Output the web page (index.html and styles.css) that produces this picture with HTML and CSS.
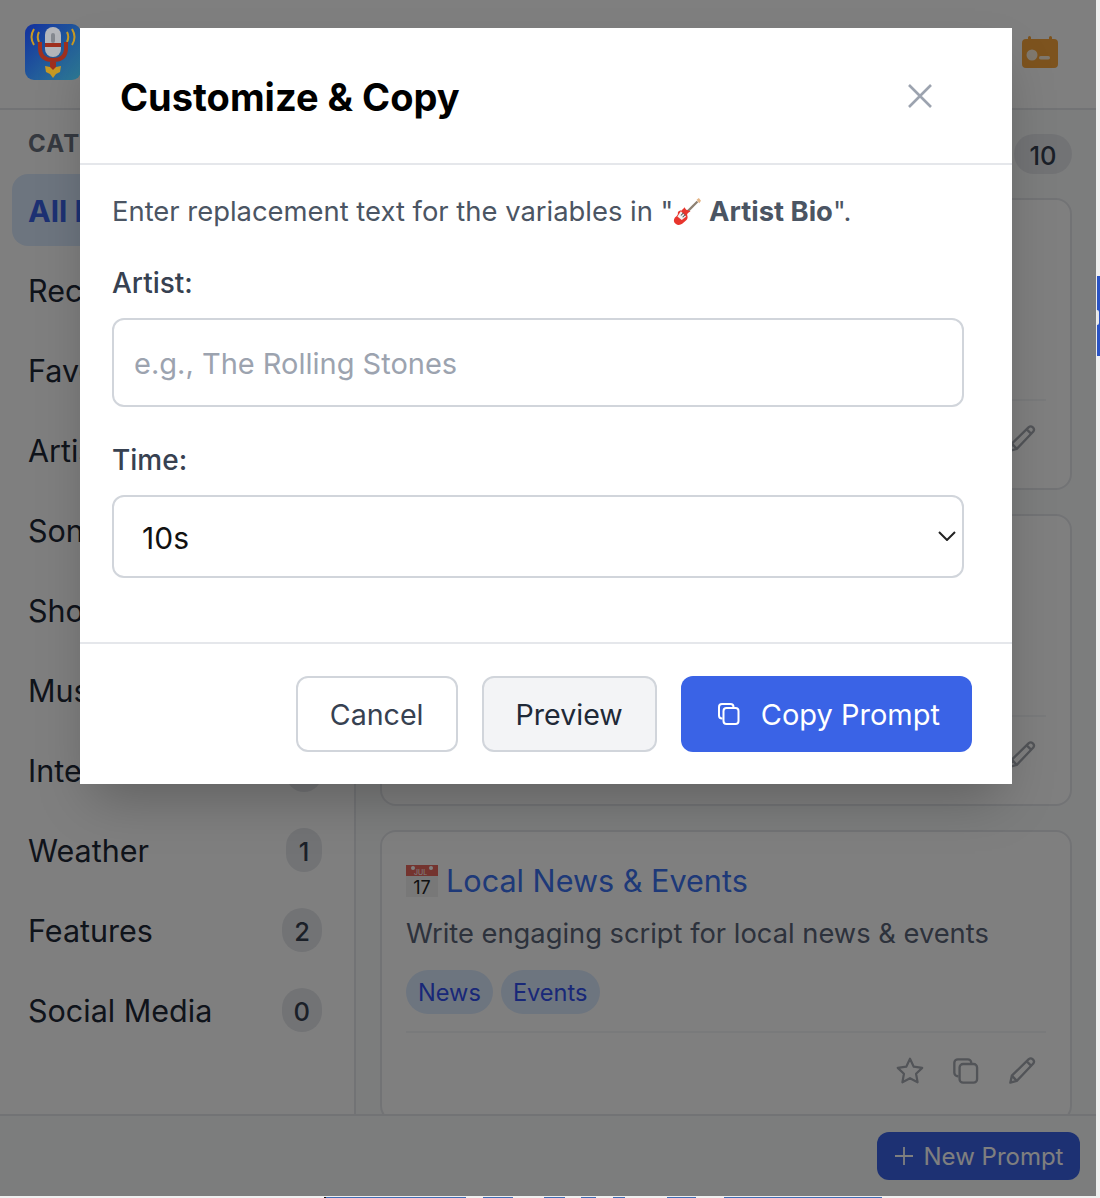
FILE: index.html
```html
<!DOCTYPE html>
<html lang="en">
<head>
  <meta charset="UTF-8">
  <meta name="viewport" content="width=device-width, initial-scale=1.0">
  <title>Prompts</title>
  <link rel="stylesheet" href="styles.css">
</head>
<body>
  <div class="app">
    <header class="topbar">
      <svg class="logo" viewBox="0 0 56 56">
        <defs>
          <linearGradient id="logoBg" x1="0" y1="0" x2="1" y2="1">
            <stop offset="0" stop-color="#12309f"/>
            <stop offset="1" stop-color="#2f7f98"/>
          </linearGradient>
        </defs>
        <rect width="56" height="56" rx="9" fill="url(#logoBg)"/>
        <path d="M9 5q-5 8 0 16M14 8q-2.500 5 0 10M47 5q5 8 0 16M42 8q2.500 5 0 10" fill="none" stroke="#c89a24" stroke-width="2"/>
        <rect x="20" y="3" width="16" height="30" rx="8" fill="#b4b6bb"/>
        <rect x="26" y="9" width="4" height="10" rx="2" fill="#84888f"/>
        <rect x="20" y="19" width="16" height="4" fill="#a0301e"/>
        <path d="M15 18v6q0 12 13 12t13-12v-6" fill="none" stroke="#a0301e" stroke-width="4"/>
        <path d="M28 38l3 5 5-1-1 6-4 2-3 4-3-4-4-2-1-6 5 1z" fill="#c89a24"/>
        <path d="M25 38h6v5l-3 3-3-3z" fill="#a0301e"/>
      </svg>
      <svg class="radio-icon" viewBox="0 0 36 32">
        <path d="M6 1.500a1.500 1.500 0 0 1 3 0V3h18V1.500a1.500 1.500 0 0 1 3 0V3h2q4 0 4 4v21q0 4-4 4H4q-4 0-4-4V7q0-4 4-4h2z" fill="#faa73c"/>
        <circle cx="10" cy="19" r="5.500" fill="#fff1dc"/>
        <rect x="17" y="20" width="11" height="3.500" rx="1.700" fill="#fff1dc"/>
      </svg>
    </header>

    <div class="content">
      <aside class="sidebar">
        <h3 class="side-title">CATEGORIES</h3>
        <a class="side-item active"><span>All Prompts</span><span class="count">10</span></a>
        <a class="side-item"><span>Recent</span><span class="count">0</span></a>
        <a class="side-item"><span>Favorites</span><span class="count">0</span></a>
        <a class="side-item"><span>Artists</span><span class="count">1</span></a>
        <a class="side-item"><span>Songs</span><span class="count">1</span></a>
        <a class="side-item"><span>Shows</span><span class="count">1</span></a>
        <a class="side-item"><span>Music</span><span class="count">1</span></a>
        <a class="side-item"><span>Interviews</span><span class="count">1</span></a>
        <a class="side-item"><span>Weather</span><span class="count">1</span></a>
        <a class="side-item"><span>Features</span><span class="count">2</span></a>
        <a class="side-item"><span>Social Media</span><span class="count">0</span></a>
      </aside>

      <main class="main">
        <div class="main-head"><span class="count">10</span></div>

        <article class="card">
          <div class="card-body"></div>
          <div class="card-actions">
            <svg class="act" viewBox="0 0 24 24"><use href="#star"/></svg>
            <svg class="act" viewBox="0 0 24 24"><use href="#copy"/></svg>
            <svg class="act" viewBox="0 0 24 24"><use href="#pencil"/></svg>
          </div>
        </article>

        <article class="card">
          <div class="card-body"></div>
          <div class="card-actions">
            <svg class="act" viewBox="0 0 24 24"><use href="#star"/></svg>
            <svg class="act" viewBox="0 0 24 24"><use href="#copy"/></svg>
            <svg class="act" viewBox="0 0 24 24"><use href="#pencil"/></svg>
          </div>
        </article>

        <article class="card">
          <div class="card-body">
            <h4 class="card-title">
              <svg class="cal" viewBox="0 0 32 32">
                <rect width="32" height="32" fill="#f0f0f0"/>
                <rect width="32" height="11" fill="#e8685e"/>
                <circle cx="7" cy="3" r="2" fill="#fff"/>
                <circle cx="25" cy="3" r="2" fill="#fff"/>
                <text x="8" y="10" class="cal-month">JUL</text>
                <text x="16" y="29" text-anchor="middle" class="cal-num">17</text>
              </svg>
              <span>Local News &amp; Events</span>
            </h4>
            <p class="card-desc">Write engaging script for local news &amp; events</p>
            <div class="tags"><span class="tag">News</span><span class="tag">Events</span></div>
          </div>
          <div class="card-actions">
            <svg class="act" viewBox="0 0 24 24"><use href="#star"/></svg>
            <svg class="act" viewBox="0 0 24 24"><use href="#copy"/></svg>
            <svg class="act" viewBox="0 0 24 24"><use href="#pencil"/></svg>
          </div>
        </article>
      </main>
    </div>

    <footer class="bottombar">
      <button class="new-btn">
        <svg class="plus" viewBox="0 0 20 20"><path d="M10 1v18M1 10h18" fill="none" stroke="currentColor" stroke-width="1.800"/></svg>
        <span>New Prompt</span>
      </button>
    </footer>

    <div class="overlay">
      <div class="modal">
        <div class="modal-head">
          <h2>Customize &amp; Copy</h2>
          <svg class="close" viewBox="0 0 24 24"><path d="M1 1l22 22M23 1L1 23" fill="none" stroke="currentColor" stroke-width="2.600"/></svg>
        </div>
        <div class="modal-body">
          <p class="intro">Enter replacement text for the variables in "<svg class="guitar" viewBox="0 0 32 32">
              <path d="M15 17L28 4" stroke="#8d8072" stroke-width="2.600"/>
              <path d="M27 2l2.500-2L32 3l-2 3z" fill="#e3b487"/>
              <path d="M13.500 10.500c.5 2 1.500 3 3.500 3.500l3 1-3 2c-1 1-1 2-.5 3.500.5 2 0 4-2 5.500l-4 3.500c-2 1.500-5 2-7.500 0S.5 25 2 22.500c1-1.500 3-2 3.500-4 .3-1.500-.5-2.500 1-3.500 1.500-1 3 0 4-1.500z" fill="#e8352d"/>
              <path d="M9 15l6 6-5 4-5-4z" fill="#f2f2f2"/>
              <path d="M9 20l3-3M11 22l3-3" stroke="#555" stroke-width="1.200"/>
            </svg> <b>Artist Bio</b>".</p>
          <label class="field-label">Artist:</label>
          <input class="text-input" type="text" placeholder="e.g., The Rolling Stones">
          <label class="field-label">Time:</label>
          <div class="select-wrap">
            <select class="select-input"><option>10s</option></select>
            <svg class="chevron" viewBox="0 0 18 10"><path d="M1 1l8 8 8-8" fill="none" stroke="currentColor" stroke-width="2"/></svg>
          </div>
        </div>
        <div class="modal-foot">
          <button class="btn">Cancel</button>
          <button class="btn btn-gray">Preview</button>
          <button class="btn btn-primary">
            <svg class="copy-icon" viewBox="0 0 24 24"><use href="#copy"/></svg>
            <span>Copy Prompt</span>
          </button>
        </div>
      </div>
    </div>
  </div>

  <div class="side-tab"><span class="side-notch"></span></div>
  <div class="dock-edge"></div>

  <svg class="defs" width="0" height="0">
    <symbol id="star" viewBox="0 0 24 24"><path d="M12 1.500l3.200 6.800 7.300 1-5.300 5.100 1.300 7.300L12 18.200l-6.500 3.500 1.300-7.300L1.500 9.300l7.300-1z" fill="none" stroke="currentColor" stroke-width="1.900" stroke-linejoin="round"/></symbol>
    <symbol id="copy" viewBox="0 0 24 24"><path d="M16.500 5.500V5a3 3 0 0 0-3-3H5a3 3 0 0 0-3 3v8.500a3 3 0 0 0 3 3h.5" fill="none" stroke="currentColor" stroke-width="2"/><rect x="6.500" y="6" width="15" height="16" rx="3" fill="none" stroke="currentColor" stroke-width="2"/></symbol>
    <symbol id="pencil" viewBox="0 0 24 24"><path d="M2 22l1.300-6L17.800 1.800q1.700-1.400 3.500.2t.4 3.600L7.500 20.500zM3.300 16l4.200 4.500M16 3.800l4.200 4" fill="none" stroke="currentColor" stroke-width="2" stroke-linejoin="round"/></symbol>
  </svg>
</body>
</html>
```
FILE: styles.css
```css
* {
  box-sizing: border-box;
}
body {
  margin: 0;
  height: 1198px;
  overflow: hidden;
  background: #efefef;
  font-family: "Inter", "Liberation Sans", sans-serif;
  color: #1f2937;
}
.app {
  position: relative;
  width: 1096px;
  height: 1196px;
  display: flex;
  flex-direction: column;
  background: #f9fafb;
  overflow: hidden;
}
.topbar {
  flex: none;
  height: 110px;
  background: #fff;
  border-bottom: 2px solid #e5e7eb;
  padding: 24px 38px 0 25px;
  display: flex;
  justify-content: space-between;
}
/* logo keeps its colours above the dim layer */
.logo {
  position: relative;
  z-index: 1;
  width: 56px;
  height: 56px;
}
.radio-icon {
  width: 36px;
  height: 32px;
  margin-top: 12px;
}
.content {
  flex: 1;
  min-height: 0;
  display: flex;
}
.sidebar {
  flex: none;
  width: 356px;
  background: #fff;
  border-right: 2px solid #e5e7eb;
  padding: 0 12px;
}
.side-title {
  margin: 0;
  height: 64px;
  padding: 19px 0 0 16px;
  font-size: 24px;
  line-height: 30px;
  font-weight: 700;
  letter-spacing: 1.200px;
  color: #6b7280;
}
.side-item {
  height: 72px;
  margin-bottom: 8px;
  padding: 0 20px 0 16px;
  border-radius: 16px;
  display: flex;
  align-items: center;
  justify-content: space-between;
  font-size: 30.500px;
}
.side-item.active {
  background: #dbeafe;
  color: #3a63e6;
  font-weight: 700;
}
.count {
  min-width: 36px;
  height: 44px;
  padding: 2px 12px 0;
  border-radius: 22px;
  background: #e5e7eb;
  color: #374151;
  font-size: 25.500px;
  font-weight: 500;
  display: flex;
  align-items: center;
  justify-content: center;
}
.main {
  flex: 1;
  min-width: 0;
  padding: 0 24px;
  overflow: hidden;
}
.main-head {
  height: 88px;
  padding-top: 24px;
  display: flex;
  justify-content: flex-end;
}
.main-head .count {
  width: 58px;
  height: 40px;
  border-radius: 20px;
}
.card {
  height: 292px;
  margin-bottom: 24px;
  background: #fff;
  border: 2px solid #e5e7eb;
  border-radius: 16px;
  padding: 29px 24px 0;
}
.card-body {
  height: 170px;
}
.card-title {
  margin: 0 0 13px;
  height: 40px;
  padding-bottom: 1px;
  display: flex;
  align-items: center;
  gap: 8px;
  font-size: 30.600px;
  font-weight: 400;
  color: #3c72f0;
}
.cal {
  width: 32px;
  height: 32px;
}
.cal-num {
  font-size: 18px;
  fill: #222;
}
.cal-month {
  font-size: 7px;
  fill: #fff;
}
.card-desc {
  margin: 0 0 16px;
  font-size: 27.300px;
  line-height: 40px;
  color: #5a6478;
}
.tags {
  display: flex;
  gap: 8px;
}
.tag {
  height: 44px;
  padding: 0 12px;
  border-radius: 22px;
  background: #dbeafe;
  color: #3250f0;
  font-size: 23.600px;
  display: flex;
  align-items: center;
}
.card-actions {
  border-top: 2px solid #f3f4f6;
  padding: 24px 10px 0 0;
  display: flex;
  justify-content: flex-end;
  gap: 28px;
}
.act {
  width: 28px;
  height: 28px;
  color: #a4a8b0;
}
.bottombar {
  flex: none;
  height: 82px;
  background: #f9fafb;
  border-top: 2px solid #e5e7eb;
  padding: 16px 16px 0 0;
  display: flex;
  justify-content: flex-end;
}
.new-btn {
  width: 203px;
  height: 48px;
  border: none;
  border-radius: 12px;
  background: #3a63e6;
  color: #fff;
  font-family: inherit;
  font-size: 24px;
  display: flex;
  align-items: center;
  justify-content: center;
  gap: 10px;
}
.plus {
  width: 20px;
  height: 20px;
}
.overlay {
  position: absolute;
  inset: 0;
  background: rgba(0, 0, 0, 0.5);
  padding: 28px 0 0 80px;
}
.modal {
  position: relative;
  z-index: 2;
  width: 932px;
  height: 756px;
  background: #fff;
  box-shadow: 0 25px 50px -12px rgba(0, 0, 0, 0.25);
  display: flex;
  flex-direction: column;
}
.modal-head {
  height: 137px;
  flex: none;
  border-bottom: 2px solid #e5e7eb;
  padding: 0 80px 0 40px;
  display: flex;
  align-items: center;
  justify-content: space-between;
}
.modal-head h2 {
  margin: 2px 0 0;
  font-size: 38px;
  font-weight: 700;
  color: #000;
}
.close {
  width: 24px;
  height: 24px;
  color: #9ca3af;
}
.modal-body {
  flex: 1;
  padding: 26px 48px 0 32px;
}
.intro {
  margin: 0 0 32px;
  font-size: 27.400px;
  line-height: 40px;
  color: #4b5563;
}
.intro b {
  font-weight: 700;
}
.guitar {
  width: 28px;
  height: 28px;
  vertical-align: -5px;
}
.field-label {
  display: block;
  margin-bottom: 15px;
  font-size: 28px;
  line-height: 40px;
  font-weight: 500;
  color: #374151;
}
.text-input {
  display: block;
  width: 100%;
  height: 89px;
  margin-bottom: 33px;
  padding: 2px 20px 0;
  border: 2px solid #d1d5db;
  border-radius: 12px;
  font-family: inherit;
  font-size: 29px;
  background: #fff;
}
.text-input::placeholder {
  color: #9ca3af;
}
.select-wrap {
  position: relative;
}
.select-input {
  display: block;
  width: 100%;
  height: 83px;
  padding: 2px 28px 0;
  border: 2px solid #d1d5db;
  border-radius: 12px;
  appearance: none;
  background: #fff;
  color: #111;
  font-family: inherit;
  font-size: 30px;
}
.chevron {
  position: absolute;
  top: 36px;
  right: 8px;
  width: 18px;
  height: 10px;
  color: #222;
}
.modal-foot {
  flex: none;
  height: 142px;
  border-top: 2px solid #e5e7eb;
  padding: 32px 40px 0 0;
  display: flex;
  justify-content: flex-end;
  align-items: flex-start;
  gap: 24px;
}
.btn {
  height: 76px;
  padding: 0 32px;
  border: 2px solid #d1d5db;
  border-radius: 12px;
  background: #fff;
  color: #374151;
  font-family: inherit;
  font-size: 28.600px;
  display: flex;
  align-items: center;
}
.btn-gray {
  background: #f3f4f6;
  color: #1f2937;
}
.btn-primary {
  border: none;
  background: #3a63e6;
  color: #fff;
  font-size: 29px;
  padding: 0 32px 0 36px;
  gap: 20px;
}
.copy-icon {
  width: 24px;
  height: 24px;
}
.side-tab {
  position: absolute;
  top: 276px;
  left: 1097px;
  width: 3px;
  height: 80px;
  background: #2b54c5;
}
.side-notch {
  position: absolute;
  top: 34px;
  left: 0;
  width: 2px;
  height: 15px;
  background: #e8e8e8;
  border-radius: 0 8px 8px 0;
}
/* sliver of the dock under the window */
.dock-edge {
  position: absolute;
  top: 1197px;
  left: 324px;
  width: 558px;
  height: 1px;
  background: linear-gradient(to right,
    #111 0 2px, #3f6eb5 2px 142px, transparent 142px 159px,
    #3f6eb5 159px 189px, transparent 189px 220px,
    #3f6eb5 220px 241px, transparent 241px 257px,
    #3f6eb5 257px 272px, transparent 272px 289px,
    #3f6eb5 289px 301px, transparent 301px 343px,
    #3f6eb5 343px 372px, transparent 372px 400px,
    #3f6eb5 400px 558px);
}
.defs {
  position: absolute;
}
```
